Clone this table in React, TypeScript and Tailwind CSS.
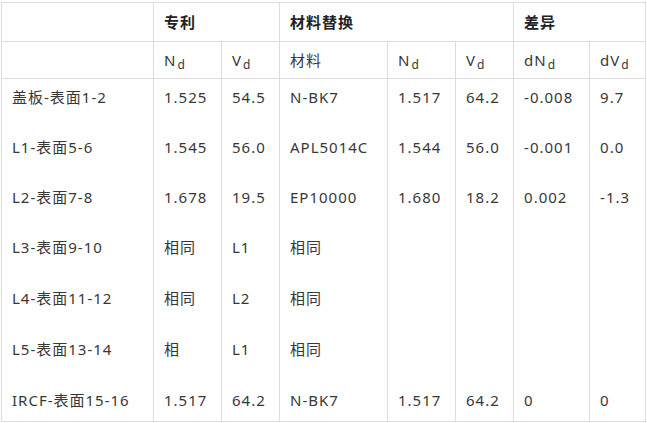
import React from "react";

type Row = string[];

const rows: Row[] = [
  ["盖板-表面1-2", "1.525", "54.5", "N-BK7", "1.517", "64.2", "-0.008", "9.7"],
  ["L1-表面5-6", "1.545", "56.0", "APL5014C", "1.544", "56.0", "-0.001", "0.0"],
  ["L2-表面7-8", "1.678", "19.5", "EP10000", "1.680", "18.2", "0.002", "-1.3"],
  ["L3-表面9-10", "相同", "L1", "相同", "", "", "", ""],
  ["L4-表面11-12", "相同", "L2", "相同", "", "", "", ""],
  ["L5-表面13-14", "相", "L1", "相同", "", "", "", ""],
  ["IRCF-表面15-16", "1.517", "64.2", "N-BK7", "1.517", "64.2", "0", "0"],
];

// row heights tuned to the screenshot
const heights = ["h-[50px]", "h-[50px]", "h-[50px]", "h-[51px]", "h-[51px]", "h-[51px]", "h-[40px]"];

const Sub = ({ children }: { children: React.ReactNode }) => (
  <span>
    {children}
    <sub className="text-[12px] ml-[1px] relative top-[3px]">d</sub>
  </span>
);

export default function App() {
  const cell = "border border-[#dcdcdc] px-[10px] text-left";
  return (
    <div
      className="w-[647px] h-[423px] bg-white pt-[2px] pl-[1px] text-[15px] tracking-[1px] text-[#383838]"
      style={{ fontFamily: '"Noto Sans", "Noto Sans CJK SC", sans-serif' }}
    >
      <table className="table-fixed border-collapse w-[644px]">
        <colgroup>
          <col className="w-[152px]" />
          <col className="w-[68px]" />
          <col className="w-[58px]" />
          <col className="w-[108px]" />
          <col className="w-[68px]" />
          <col className="w-[58px]" />
          <col className="w-[76px]" />
          <col className="w-[56px]" />
        </colgroup>
        <thead>
          <tr className="h-[39px]">
            <th className={cell}></th>
            <th colSpan={2} className={`${cell} font-bold text-[#222]`}>专利</th>
            <th colSpan={3} className={`${cell} font-bold text-[#222]`}>材料替换</th>
            <th colSpan={2} className={`${cell} font-bold text-[#222]`}>差异</th>
          </tr>
          <tr className="h-[37px] font-normal">
            <td className={cell}></td>
            <td className={cell}><Sub>N</Sub></td>
            <td className={cell}><Sub>V</Sub></td>
            <td className={cell}>材料</td>
            <td className={cell}><Sub>N</Sub></td>
            <td className={cell}><Sub>V</Sub></td>
            <td className={cell}><Sub>dN</Sub></td>
            <td className={cell}><Sub>dV</Sub></td>
          </tr>
        </thead>
        <tbody>
          {rows.map((r, i) => (
            <tr key={i} className={heights[i]}>
              {r.map((c, j) => (
                <td
                  key={j}
                  className={`border-x border-[#dcdcdc] px-[10px] align-top pt-[8px] leading-[20px] whitespace-nowrap ${
                    i === rows.length - 1 ? "border-b" : ""
                  }`}
                >
                  {c}
                </td>
              ))}
            </tr>
          ))}
        </tbody>
      </table>
    </div>
  );
}
